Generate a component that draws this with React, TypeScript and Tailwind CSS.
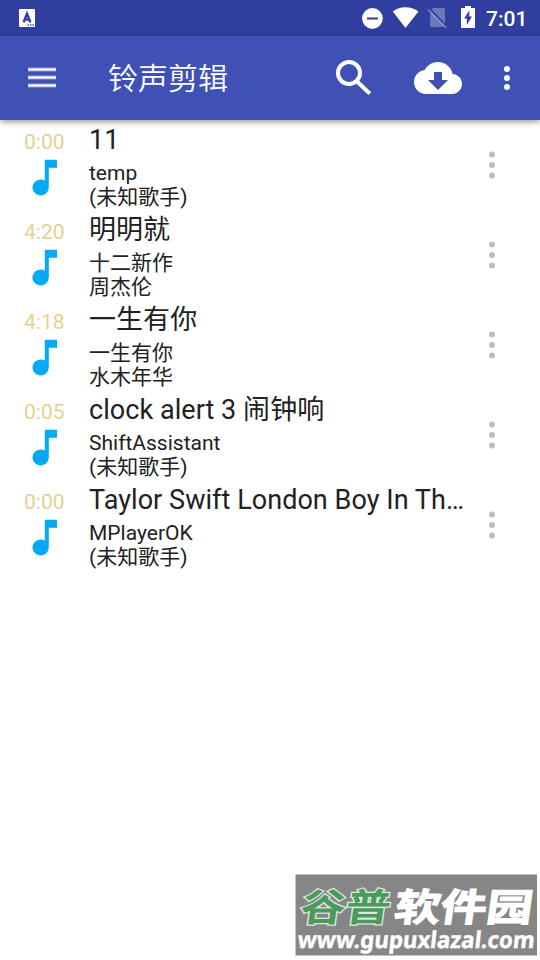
import { ReactNode } from 'react';

interface Track {
  time: string;
  title: string;
  album: string;
  artist: string;
}

const tracks: Track[] = [
  { time: '0:00', title: '11', album: 'temp', artist: '(未知歌手)' },
  { time: '4:20', title: '明明就', album: '十二新作', artist: '周杰伦' },
  { time: '4:18', title: '一生有你', album: '一生有你', artist: '水木年华' },
  { time: '0:05', title: 'clock alert 3 闹钟响', album: 'ShiftAssistant', artist: '(未知歌手)' },
  { time: '0:00', title: 'Taylor Swift London Boy In Th…', album: 'MPlayerOK', artist: '(未知歌手)' },
];

export default function App() {
  return (
    <div className="flex h-[960px] w-[540px] flex-col overflow-hidden bg-white font-['Roboto','Noto_Sans_CJK_SC',sans-serif] text-[#212121]">
      <StatusBar />
      <Toolbar />
      <main className="flex-1">
        {tracks.map((track, i) => (
          <TrackRow key={i} track={track} />
        ))}
      </main>
      <Watermark />
    </div>
  );
}

function StatusBar() {
  return (
    <div className="flex h-9 shrink-0 items-center bg-[#303f9f] text-white">
      {/* Keyboard notification */}
      <svg className="ml-[19px] h-[18px] w-4" viewBox="0 0 16 18">
        <rect width="16" height="18" rx="1" fill="#fff" />
        <path d="M4.6 13.2 8 4.8l3.4 8.400M6 10.6h4" fill="none" stroke="#303f9f" strokeWidth="2.4" />
        <path d="M8.5 16h1.4M11 16h1.4M13.500 16h1.400" stroke="#303f9f" strokeWidth="1.500" />
      </svg>

      <div className="ml-auto flex h-9 items-center">
        <svg className="h-9 w-[130px]" viewBox="355 0 130 36">
          {/* Do not disturb */}
          <circle cx="372.400" cy="18.500" r="10.400" fill="#fff" />
          <path d="M367 18.500h11" stroke="#303f9f" strokeWidth="2" />
          {/* Wifi */}
          <path d="M405.500 28 392.800 11.600C396 9 400 7.200 405.500 7.200s9.500 1.800 12.900 4.400z" fill="#fff" />
          {/* No SIM */}
          <path d="M430.500 10.500 433 8h10.500q1.500 0 1.500 1.500v16q0 1.500-1.500 1.500h-12q-1.500 0-1.500-1.500z" fill="#fff" opacity=".3" />
          <path d="m429.500 9 18 18.500" stroke="#303f9f" strokeWidth="2.500" />
          <path d="m428 9.500 18.500 18.500" stroke="#fff" strokeWidth="1.500" opacity=".35" />
          {/* Battery */}
          <path d="M465 6h6v2h4v20h-14V8h4z" fill="#fff" />
          <path d="M469.300 10.500v6h2.700l-5.200 8.500v-6.500H464z" fill="#303f9f" />
        </svg>
        <span className="w-[55px] pt-px pl-px text-[21px] leading-9 font-medium">7:01</span>
      </div>
    </div>
  );
}

function Toolbar() {
  return (
    <header className="z-10 flex h-[84px] shrink-0 items-center bg-[#3f51b5] text-white shadow-[0_2px_6px_rgba(0,0,0,0.4)]">
      <svg className="ml-7 h-6 w-7" viewBox="0 0 28 24">
        <path d="M0 3.500h28M0 11.500h28M0 19.500h28" stroke="currentColor" strokeWidth="4" opacity=".45" />
        <path d="M0 3.500h28M0 11.500h28M0 19.500h28" stroke="currentColor" strokeWidth="2" />
      </svg>
      <h1 className="ml-[52px] pt-0.5 text-[30px] leading-10 font-[350]">铃声剪辑</h1>
      <div className="ml-auto flex items-center">
        <svg className="h-9 w-9" viewBox="335 60 36 36" fill="none" stroke="currentColor" strokeWidth="4">
          <circle cx="349" cy="73" r="11" />
          <path d="m357.500 82 12.300 11.500" />
        </svg>
        <Icon className="ml-[43px] h-12 w-12">
          <path d="M19.350 10.040C18.670 6.590 15.640 4 12 4 9.110 4 6.600 5.640 5.350 8.040 2.340 8.360 0 10.910 0 14c0 3.310 2.690 6 6 6h13c2.760 0 5-2.240 5-5 0-2.640-2.050-4.780-4.650-4.960zM17 13l-5 5-5-5h3V9h4v4z" />
        </Icon>
        <Icon className="mr-[15px] ml-[27px] h-9 w-9">
          <Dots r={2} />
        </Icon>
      </div>
    </header>
  );
}

function TrackRow({ track }: { track: Track }) {
  return (
    <div className="flex h-[90px]">
      <div className="w-[89px] pt-2.5 pl-6">
        <div className="h-6 text-[21px] leading-6 text-[#e3d292]">{track.time}</div>
        <Icon className="-ml-1 h-12 w-12 text-[#03a9f4]">
          <path d="M12.400 2.900v10.400a4.100 4 0 1 0 2 3.500V6.900h4.100v-4z" />
        </Icon>
      </div>
      <div className="w-[376px] pt-1">
        <div className="h-[37px] text-[27px] leading-8 tracking-[0.05px] whitespace-nowrap">{track.title}</div>
        <div className="h-6 text-[21px] leading-6">{track.album}</div>
        <div className="h-6 text-[21px] leading-6">{track.artist}</div>
      </div>
      <Icon className="mt-6 ml-[6px] h-[42px] w-[42px] text-[#bdbdbd]">
        <Dots r={1.7} />
      </Icon>
    </div>
  );
}

function Watermark() {
  return (
    <svg className="mr-[3px] mb-1 h-[82px] w-[242px] shrink-0 self-end" viewBox="295 874 242 82">
      <rect x="295.500" y="874.500" width="242" height="81" fill="#868686" />
      <g transform="translate(299 921) skewX(-8)" className="font-['Noto_Sans_CJK_SC',sans-serif] text-[38px] font-bold">
        <text textLength="90" lengthAdjust="spacingAndGlyphs" fill="#4a9b5b" stroke="#dfe8df" strokeWidth="2.500" paintOrder="stroke">谷普</text>
        <text x="94" textLength="138" lengthAdjust="spacingAndGlyphs" fill="#fff" stroke="#fff" strokeWidth="1.200">软件园</text>
      </g>
      <g transform="translate(297 948) skewX(-6)">
        <text textLength="237" lengthAdjust="spacingAndGlyphs" fill="#fff" stroke="#fff" strokeWidth=".4" className="font-['Noto_Sans',sans-serif] text-[23px] font-bold">www.gupuxlazal.com</text>
      </g>
    </svg>
  );
}

function Icon({ className, children }: { className: string; children: ReactNode }) {
  return (
    <svg className={className} viewBox="0 0 24 24" fill="currentColor">
      {children}
    </svg>
  );
}

function Dots({ r }: { r: number }) {
  return (
    <>
      <circle cx="12" cy="6" r={r} />
      <circle cx="12" cy="12" r={r} />
      <circle cx="12" cy="18" r={r} />
    </>
  );
}
